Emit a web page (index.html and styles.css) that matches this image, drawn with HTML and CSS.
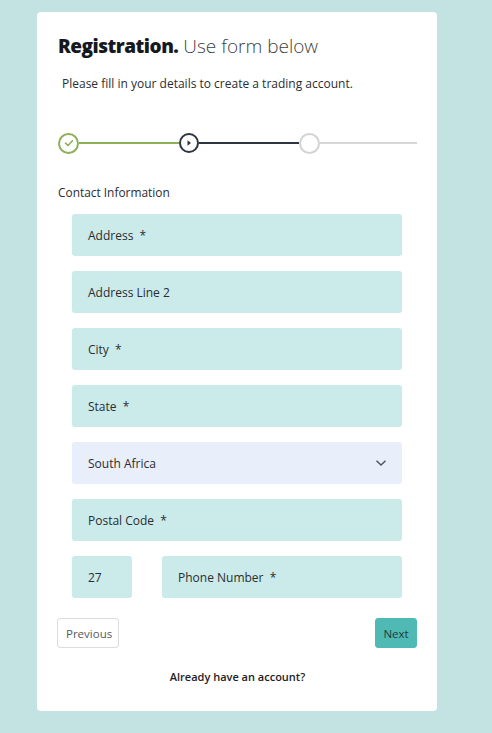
FILE: index.html
```html
<!DOCTYPE html>
<html>
<head>
<meta charset="utf-8">
<link rel="stylesheet" href="styles.css">
</head>
<body>
<div class="card">
  <h1 class="title"><b>Registration.</b> <span class="light">Use form below</span></h1>
  <p class="sub">Please fill in your details to create a trading account.</p>
  <div class="stepper">
    <div class="step done">
      <svg width="14" height="14" viewBox="0 0 14 14"><path d="M3.5 7.2 L6 9.5 L10.5 4.8" fill="none" stroke="#8cb15a" stroke-width="1.6" stroke-linecap="round" stroke-linejoin="round"/></svg>
    </div>
    <div class="line green"></div>
    <div class="step current">
      <svg width="8" height="8" viewBox="0 0 8 8"><path d="M2.5 1.2 L6 4 L2.5 6.8 Z" fill="#2d3540"/></svg>
    </div>
    <div class="line dark"></div>
    <div class="step todo"></div>
    <div class="line gray"></div>
  </div>
  <div class="section">Contact Information</div>
  <div class="fields">
    <div class="field">Address&nbsp; *</div>
    <div class="field">Address Line 2</div>
    <div class="field">City&nbsp; *</div>
    <div class="field">State&nbsp; *</div>
    <div class="field select"><span>South Africa</span>
      <svg width="12" height="8" viewBox="0 0 12 8"><path d="M1.5 1.8 L6 6 L10.5 1.8" fill="none" stroke="#4a5260" stroke-width="1.4"/></svg>
    </div>
    <div class="field">Postal Code&nbsp; *</div>
    <div class="phone-row">
      <div class="field code">27</div>
      <div class="field phone">Phone Number&nbsp; *</div>
    </div>
  </div>
  <div class="buttons">
    <button class="btn prev">Previous</button>
    <button class="btn next">Next</button>
  </div>
  <div class="already">Already have an account?</div>
</div>
</body>
</html>
```
FILE: styles.css
```css
html, body { margin: 0; padding: 0; }
body {
  background: #c2e3e1;
  font-family: "Open Sans", "Noto Sans", sans-serif;
  color: #1e2124;
  width: 492px;
  height: 733px;
  overflow: hidden;
}
.card {
  margin: 12px 0 0 37px;
  width: 400px;
  height: 699px;
  box-sizing: border-box;
  background: #fff;
  border-radius: 4px;
  padding: 22px 20px 0 21px;
}
.title {
  margin: 0;
  font-size: 19px;
  line-height: 24px;
  font-weight: 700;
  color: #15191d;
}
.title b { letter-spacing: -0.5px; }
.title .light { font-weight: 300; color: #3b3f44; }
.sub {
  margin: 18px 0 0 4px;
  font-size: 12px;
  line-height: 16px;
  color: #2a2d31;
}
.stepper {
  display: flex;
  align-items: center;
  margin-top: 40px;
  height: 22px;
}
.step {
  width: 17px;
  height: 17px;
  border-radius: 50%;
  flex: none;
  display: flex;
  align-items: center;
  justify-content: center;
  background: #fff;
}
.step.done { border: 2px solid #8cb15a; }
.step.current { border: 2.5px solid #2d3540; width: 16px; height: 16px; }
.step.todo { border: 2px solid #d3d3d3; }
.line { height: 2px; width: 100px; flex: none; }
.line.green { background: #8cb15a; }
.line.dark { background: #2d3540; }
.line.gray { background: #d6d6d6; width: 97px; }
.section {
  margin-top: 30px;
  font-size: 11.9px;
  line-height: 16px;
  color: #2a2d31;
}
.fields {
  margin: 14px 0 0 14px;
  width: 330px;
  display: flex;
  flex-direction: column;
  gap: 15px;
}
.field {
  height: 42px;
  box-sizing: border-box;
  background: #cbeaea;
  border-radius: 3px;
  padding: 0 16px;
  display: flex;
  align-items: center;
  font-size: 12px;
  color: #2a2d31;
}
.field.select {
  background: #e8eefa;
  justify-content: space-between;
  padding-right: 15px;
}
.phone-row {
  display: flex;
  gap: 30px;
}
.field.code { width: 60px; padding-left: 16px; }
.field.phone { flex: 1; }
.buttons {
  display: flex;
  justify-content: space-between;
  margin-top: 20px;
  margin-left: -1px;
}
.btn {
  font-family: "Open Sans", "Noto Sans", sans-serif;
  font-size: 11.5px;
  height: 30px;
  border-radius: 3px;
  padding: 0 8px;
  cursor: pointer;
}
.btn.prev {
  background: #fff;
  border: 1px solid #dcdcdc;
  color: #555a60;
  width: 62px;
}
.btn.next {
  background: #4fb9b4;
  border: 1px solid #4fb9b4;
  color: #1f3b3c;
  width: 42px;
  padding: 0;
}
.already {
  margin-top: 21px;
  text-align: center;
  font-size: 11px;
  font-weight: 600;
  color: #1e2124;
}
```
